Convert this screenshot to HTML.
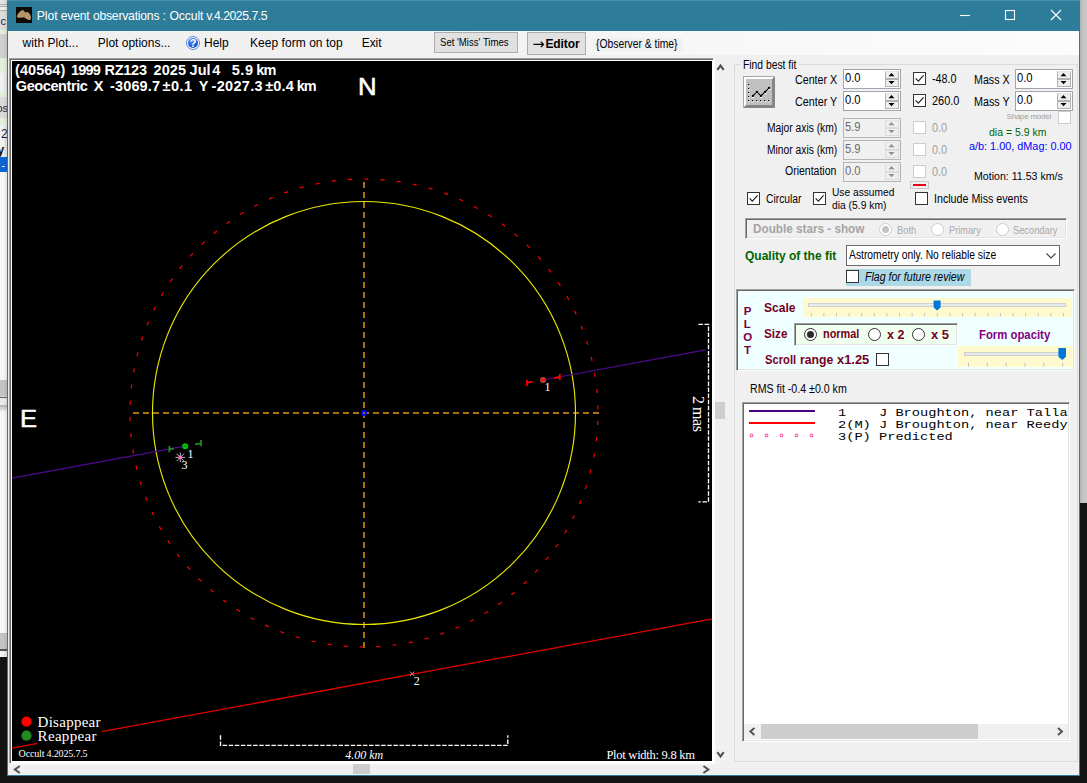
<!DOCTYPE html>
<html lang="en"><head><meta charset="utf-8"><title>Plot event observations : Occult v.4.2025.7.5</title>
<style>
html,body{margin:0;padding:0}
body{width:1087px;height:783px;overflow:hidden;position:relative;background:#131313;font-family:"Liberation Sans",Arial,sans-serif}
.a{position:absolute}
.t{position:absolute;white-space:pre;line-height:16px}
.btn{box-sizing:border-box;background:#e1e1e1;border:1px solid #adadad}
svg{display:block;overflow:visible}
</style></head><body>
<div class="a" id="left-strip" style="left:0;top:0;width:7px;height:657px;overflow:hidden;background:linear-gradient(90deg,#f3f3f3,#efefef 55%,#e3e1df)">
<div class="a" style="left:0;top:0px;width:7px;height:4px;background:#e2e2e2"></div>
<div class="a" style="left:0;top:4px;width:7px;height:1px;background:#adadad"></div>
<div class="a" style="left:0;top:5px;width:7px;height:1px;background:#e6e6e6"></div>
<div class="a" style="left:0;top:6px;width:7px;height:1px;background:#adadad"></div>
<div class="a" style="left:0;top:7px;width:7px;height:3px;background:#e6f3e2"></div>
<div class="a" style="left:0;top:10px;width:7px;height:1px;background:#b4b4b4"></div>
<div class="a" style="left:0;top:11px;width:7px;height:19px;background:#dcdcdc"></div>
<div class="a" style="left:0;top:30px;width:7px;height:4px;background:#e3efda"></div>
<div class="a" style="left:0;top:34px;width:7px;height:24px;background:#d0d0d0"></div>
<div class="a" style="left:0;top:58px;width:7px;height:15px;background:#e3efda"></div>
<div class="a" style="left:0;top:91px;width:7px;height:6px;background:#e3efda"></div>
<div class="a" style="left:0;top:97px;width:7px;height:21px;background:#dadada"></div>
<div class="a" style="left:0;top:118px;width:7px;height:7px;background:#e3efda"></div>
<div class="a" style="left:0;top:157px;width:7px;height:15px;background:#0a64d2"></div>
<div class="a" style="left:0;top:172px;width:7px;height:461px;background:#f6f6f6"></div>
<div class="a" style="left:0;top:380px;width:7px;height:16px;background:#c4c4c4"></div>
<div class="a" style="left:0;top:396px;width:7px;height:1px;background:#d8d8d8"></div>
<div class="a" style="left:0;top:397px;width:7px;height:1px;background:#5a6070"></div>
<div class="a" style="left:0;top:398px;width:7px;height:7px;background:#e9e9e9"></div>
<div class="a" style="left:0;top:405px;width:7px;height:2px;background:#b8b8b8"></div>
<div class="a" style="left:0;top:407px;width:7px;height:2px;background:#d0d0d0"></div>
<div class="a" style="left:0;top:409px;width:7px;height:2px;background:#e4e4e4"></div>
<div class="a" style="left:0;top:633px;width:7px;height:16px;background:#c3c3c3"></div>
<div class="a" style="left:0;top:649px;width:7px;height:2px;background:#4a5560"></div>
<span class="a" style="left:0.5px;top:14.5px;font:400 11px/12px &quot;Liberation Sans&quot;,Arial,sans-serif;color:#1a1a40;white-space:pre">c</span>
<span class="a" style="left:-3.5px;top:101.5px;font:400 11px/12px &quot;Liberation Sans&quot;,Arial,sans-serif;color:#1a1a40;white-space:pre">os</span>
<span class="a" style="left:1px;top:127.5px;font:400 12px/12px &quot;Liberation Sans&quot;,Arial,sans-serif;color:#1a1a40;white-space:pre">2</span>
<span class="a" style="left:-2.5px;top:143.5px;font:700 12px/12px &quot;Liberation Sans&quot;,Arial,sans-serif;color:#111;white-space:pre">y</span>
<span class="a" style="left:1.5px;top:158.5px;font:400 11px/12px &quot;Liberation Sans&quot;,Arial,sans-serif;color:#fff;white-space:pre">-</span>
<div class="a" style="left:0;top:0;width:7px;height:657px;background:linear-gradient(90deg,rgba(0,0,0,0) 45%,rgba(60,50,40,0.10))"></div>
</div>
<div class="a" id="right-shadow" style="left:1080px;top:0;width:7px;height:503px;background:linear-gradient(90deg,#b2b2b2,#c4c4c4 40%,#c9c9c9)"></div>
<div class="a" id="window" style="left:7px;top:0;width:1073px;height:776px;box-sizing:border-box;background:#F0F0F0;border:1px solid #2D7D9A;border-top:none"></div>
<div class="a" id="titlebar" style="left:7px;top:0;width:1073px;height:31px;background:#2D7D9A;border-top:1px solid #4a8fa8;box-sizing:border-box">
<svg class="a" style="left:9px;top:6px" width="16" height="16" viewBox="0 0 16 16"><rect width="16" height="16" fill="#0d0a06"/><path d="M0.9 9.4 C1.3 7.6 2.4 6.2 3.5 5.1 C4.6 4 5.6 3 6.6 2.9 C7.4 3 7.7 3.6 8.1 4.1 C8.6 4.8 8.9 5.4 9.4 5.6 C10.1 5.2 10.8 4.9 11.5 5.1 C12.6 5.5 13.4 6.5 14 7.5 C14.7 8.7 15.1 10 14.9 11.2 C14.7 12.4 14 13.1 13 13 C12.1 12.9 11.4 12.5 10.6 12.1 C9.8 11.6 9 10.7 8.1 10.4 C7.1 10.2 6.1 10.6 5.1 10.7 C4 10.8 3 10.9 2 10.6 C1.2 10.4 0.8 10 0.9 9.4 Z" fill="#b8966c"/><path d="M8.2 4.4 C7.6 6.4 8 8.6 9 10.6" stroke="#a08058" stroke-width="0.7" fill="none"/></svg>
<svg class="a" style="left:946px;top:-1px" width="120" height="31" viewBox="953 0 120 31" fill="none" stroke="#fff" stroke-width="1.1"><path d="M960 15.5H970"/><rect x="1005.5" y="10.5" width="9" height="9"/><path d="M1051 10L1061 20M1061 10L1051 20"/></svg>
</div>
<div class="a" id="menubar" style="left:8px;top:31px;width:1071px;height:24px;background:linear-gradient(90deg,#f0f0f0 0%,#f1f1f1 35%,#f8f8f8 70%,#fcfcfc 100%)">
<div class="a" id="helpicon" style="left:178px;top:5px;width:14px;height:14px"><div class="a" style="left:0;top:0;width:14px;height:14px;box-sizing:border-box;border-radius:50%;border:1px solid #5a82da;background:#fdfdff"></div><div class="a" style="left:2px;top:2px;width:10px;height:10px;border-radius:50%;background:radial-gradient(circle at 38% 30%,#5b93f0,#1f5bd8 55%,#0a36a8)"></div><span class="a" style="left:0;top:0;width:14px;height:14px;text-align:center;font:700 11px/14.6px &quot;Liberation Sans&quot;,Arial,sans-serif;color:#fff">?</span></div>
<div class="a btn" style="left:426px;top:1px;width:84px;height:21px"></div>
<div class="a btn" style="left:519px;top:1px;width:59px;height:23px"></div>
<div class="a" style="left:585px;top:7px;width:89px;height:13px;background:#f0f0f0"></div>
</div>
<div class="a" id="plot-panel" style="left:9px;top:58px;width:718px;height:717px">
<div class="a" id="picbox" style="left:0;top:0;width:706px;height:706px;box-sizing:border-box;background:#fff;border:1px solid;border-color:#a0a0a0 #fff #fff #a0a0a0;box-shadow:inset 1px 1px 0 #696969, inset -1px -1px 0 #fcfcfc"></div>
<div class="a" style="left:704px;top:0;width:2px;height:2px;background:#fbfbfb"></div>
<div class="a" id="vscroll" style="left:706px;top:3px;width:11px;height:703px;background:#f0f0f0">
<svg class="a" style="left:0;top:0" width="11" height="703" viewBox="715 61 11 703"><path d="M717.3 69.8L720.5 65.5L723.7 69.8" fill="none" stroke="#505050" stroke-width="2.1"/><rect x="715" y="402" width="10" height="17" fill="#cdcdcd"/><path d="M717.3 752.2L720.5 756.5L723.7 752.2" fill="none" stroke="#505050" stroke-width="2.1"/></svg>
</div>
<div class="a" id="hscroll" style="left:2px;top:706px;width:704px;height:11px;background:#f0f0f0">
<svg class="a" style="left:0;top:0" width="704" height="11" viewBox="11 764 704 11"><path d="M19.8 766L14.9 769.5L19.8 773" fill="none" stroke="#505050" stroke-width="2.1"/><rect x="353" y="764" width="17" height="10" fill="#cdcdcd"/><path d="M703.4 766L708.3 769.5L703.4 773" fill="none" stroke="#505050" stroke-width="2.1"/></svg>
</div>
</div>
<svg class="a" id="plot" style="left:12px;top:61px" width="700" height="700" viewBox="12 61 700 700">
<rect x="12" y="61" width="700" height="700" fill="#000"/>
<path d="M364 182V648" stroke="#aa7208" stroke-width="2" stroke-dasharray="6 4" fill="none"/>
<path d="M133 413H599" stroke="#aa7208" stroke-width="2" stroke-dasharray="6 4" fill="none"/>
<circle cx="364" cy="413" r="211.5" fill="none" stroke="#e8e800" stroke-width="1.15"/>
<circle cx="364" cy="413" r="234" fill="none" stroke="#f00" stroke-width="1.2" stroke-dasharray="4.084 12.252" stroke-dashoffset="-7.964"/>
<path d="M12 478.10L185 446.13M543 379.97L705.5 349.94M710.5 349.02L712 348.74" stroke="#4e0a90" stroke-width="1.2" fill="none"/>
<path d="M12 748.20L712 618.84" stroke="#e00000" stroke-width="1.3" fill="none"/>
<rect x="37" y="713" width="65" height="32" fill="#000"/>
<circle cx="364" cy="413" r="2.1" fill="none" stroke="#0000ff" stroke-width="1.9"/>
<g stroke="#ff0000" stroke-width="1.8" fill="none"><path d="M526.8 380V386M526.8 382.8L532.6 381.7"/><path d="M559.8 374V380M559.8 377L554 378.1"/></g>
<circle cx="543" cy="380" r="3" fill="#bc4434"/><path d="M540.6 380.4L545.4 379.6" stroke="#ff0000" stroke-width="1.3"/>
<g stroke="#228b22" stroke-width="1.8" fill="none"><path d="M169.4 446V452.2M169.4 449.3L173.8 448.5"/><path d="M201 440V446.2M201 443.3L195 444.4"/></g>
<circle cx="185.2" cy="446.2" r="3" fill="#00c800"/><path d="M183 446.6L187.4 445.9" stroke="#0a8a0a" stroke-width="1"/>
<g stroke="#c8c8c8" stroke-width="0.9"><path d="M180.3 452.6V462.2M175.5 457.4H185.1M176.6 453.7L184 461.1M184 453.7L176.6 461.1"/></g><circle cx="180.3" cy="457.4" r="2" fill="#ff69b4"/>
<path d="M410 671.6L414.4 676M414.4 671.6L410 676" stroke="#b4b4b4" stroke-width="0.9"/><circle cx="412.2" cy="673.8" r="0.9" fill="#ff6060"/>
<circle cx="26.5" cy="721.6" r="5.1" fill="#ff0000"/><circle cx="26.5" cy="735.7" r="5.1" fill="#228b22"/>
<g stroke="#fff" stroke-width="1.35" fill="none" stroke-dasharray="4.5 1.6"><path d="M698.4 324.4H708.5V501.8H698.4"/><path d="M220.5 735.3V745.4H507.8V735.3"/></g>
</svg>
<div class="a" id="groupbox" style="left:734px;top:64px;width:344px;height:698px;box-sizing:border-box;border:1px solid #dcdcdc"></div>
<div class="a" style="left:741px;top:60px;width:58px;height:10px;background:#F0F0F0"></div>
<div class="a" id="fitbtn" style="left:743px;top:76px;width:32px;height:32px"><svg class="a" style="left:0;top:0" width="32" height="32" viewBox="743 76 32 32"><rect x="743" y="76" width="32" height="32" fill="#868686"/><path d="M743 76H775L772 79H746V105L743 108Z" fill="#fff"/><path d="M743 76H775L774 77H744V107L743 108Z" fill="#a6a6a6"/><rect x="746" y="79" width="26" height="26" fill="#c0c0c0"/><rect x="748.2" y="84.9" width="1.6" height="1.3" fill="#fff"/><rect x="748" y="84" width="1.2" height="1.2" fill="#000"/><rect x="748.2" y="88.9" width="1.6" height="1.3" fill="#fff"/><rect x="748" y="88" width="1.2" height="1.2" fill="#000"/><rect x="748.2" y="92.9" width="1.6" height="1.3" fill="#fff"/><rect x="748" y="92" width="1.2" height="1.2" fill="#000"/><rect x="748.2" y="96.9" width="1.6" height="1.3" fill="#fff"/><rect x="748" y="96" width="1.2" height="1.2" fill="#000"/><rect x="748.2" y="100.9" width="1.6" height="1.3" fill="#fff"/><rect x="748" y="100" width="1.2" height="1.2" fill="#000"/><rect x="752.2" y="100.9" width="1.6" height="1.3" fill="#fff"/><rect x="752" y="100" width="1.2" height="1.2" fill="#000"/><rect x="756.2" y="100.9" width="1.6" height="1.3" fill="#fff"/><rect x="756" y="100" width="1.2" height="1.2" fill="#000"/><rect x="760.2" y="100.9" width="1.6" height="1.3" fill="#fff"/><rect x="760" y="100" width="1.2" height="1.2" fill="#000"/><rect x="764.2" y="100.9" width="1.6" height="1.3" fill="#fff"/><rect x="764" y="100" width="1.2" height="1.2" fill="#000"/><rect x="768.2" y="100.9" width="1.6" height="1.3" fill="#fff"/><rect x="768" y="100" width="1.2" height="1.2" fill="#000"/><rect x="752.1" y="96.3" width="2.2" height="1.8" fill="#fff"/><rect x="756.1" y="92.3" width="2.2" height="1.8" fill="#fff"/><rect x="760.2" y="96.3" width="2.2" height="1.8" fill="#fff"/><rect x="764.2" y="92.3" width="2.2" height="1.8" fill="#fff"/><rect x="768.3" y="88.3" width="2.2" height="1.8" fill="#fff"/><path d="M752.9 95.9L756.9 91.9L761 95.9L765 91.9L769.1 87.9" stroke="#000" stroke-width="1.1" fill="none"/><rect x="751.9" y="94.9" width="2" height="2" fill="#000"/><rect x="755.9" y="90.9" width="2" height="2" fill="#000"/><rect x="760.0" y="94.9" width="2" height="2" fill="#000"/><rect x="764.0" y="90.9" width="2" height="2" fill="#000"/><rect x="768.1" y="86.9" width="2" height="2" fill="#000"/></svg></div>
<div class="a nud" style="left:843px;top:69px;width:58px;height:20px;box-sizing:border-box;background:#fff;border:1px solid #a0a4ac"><div class="a" style="left:41px;top:1px;width:14px;height:16px;box-sizing:border-box;background:#eeeeee;border:1px solid #b2b2b2;border-top-color:#e6e6e6"></div><div class="a" style="left:41px;top:8px;width:14px;height:2px;background:#b2b2b2"></div><svg class="a" style="left:40px;top:1px" width="14" height="16" viewBox="0 0 14 16"><path d="M4.5 5.2L7.5 2L10.5 5.2ZM4.5 10L7.5 13.2L10.5 10Z" fill="#000"/></svg></div>
<div class="a nud" style="left:843px;top:91px;width:58px;height:20px;box-sizing:border-box;background:#fff;border:1px solid #a0a4ac"><div class="a" style="left:41px;top:1px;width:14px;height:16px;box-sizing:border-box;background:#eeeeee;border:1px solid #b2b2b2;border-top-color:#e6e6e6"></div><div class="a" style="left:41px;top:8px;width:14px;height:2px;background:#b2b2b2"></div><svg class="a" style="left:40px;top:1px" width="14" height="16" viewBox="0 0 14 16"><path d="M4.5 5.2L7.5 2L10.5 5.2ZM4.5 10L7.5 13.2L10.5 10Z" fill="#000"/></svg></div>
<div class="a chk" style="left:913px;top:72px;width:13px;height:13px;box-sizing:border-box;background:#fff;border:1px solid #333333"><svg class="a" style="left:0;top:0" width="11" height="11" viewBox="0 0 11 11"><path d="M1.6 5.4L4.3 8.2L9.6 2.4" fill="none" stroke="#222" stroke-width="1.2"/></svg></div>
<div class="a chk" style="left:913px;top:94px;width:13px;height:13px;box-sizing:border-box;background:#fff;border:1px solid #333333"><svg class="a" style="left:0;top:0" width="11" height="11" viewBox="0 0 11 11"><path d="M1.6 5.4L4.3 8.2L9.6 2.4" fill="none" stroke="#222" stroke-width="1.2"/></svg></div>
<div class="a nud" style="left:1015px;top:69px;width:58px;height:20px;box-sizing:border-box;background:#fff;border:1px solid #a0a4ac"><div class="a" style="left:41px;top:1px;width:14px;height:16px;box-sizing:border-box;background:#eeeeee;border:1px solid #b2b2b2;border-top-color:#e6e6e6"></div><div class="a" style="left:41px;top:8px;width:14px;height:2px;background:#b2b2b2"></div><svg class="a" style="left:40px;top:1px" width="14" height="16" viewBox="0 0 14 16"><path d="M4.5 5.2L7.5 2L10.5 5.2ZM4.5 10L7.5 13.2L10.5 10Z" fill="#000"/></svg></div>
<div class="a nud" style="left:1015px;top:91px;width:58px;height:20px;box-sizing:border-box;background:#fff;border:1px solid #a0a4ac"><div class="a" style="left:41px;top:1px;width:14px;height:16px;box-sizing:border-box;background:#eeeeee;border:1px solid #b2b2b2;border-top-color:#e6e6e6"></div><div class="a" style="left:41px;top:8px;width:14px;height:2px;background:#b2b2b2"></div><svg class="a" style="left:40px;top:1px" width="14" height="16" viewBox="0 0 14 16"><path d="M4.5 5.2L7.5 2L10.5 5.2ZM4.5 10L7.5 13.2L10.5 10Z" fill="#000"/></svg></div>
<div class="a chk" style="left:1058px;top:111px;width:13px;height:13px;box-sizing:border-box;background:#fff;border:1px solid #cccccc"></div>
<div class="a nud" style="left:843px;top:118px;width:58px;height:20px;box-sizing:border-box;background:#f0f0f0;border:1px solid #b4b4b8"><div class="a" style="left:41px;top:1px;width:14px;height:16px;box-sizing:border-box;background:#eeeeee;border:1px solid #dcdcdc;border-top-color:#e6e6e6"></div><div class="a" style="left:41px;top:8px;width:14px;height:2px;background:#dcdcdc"></div><svg class="a" style="left:40px;top:1px" width="14" height="16" viewBox="0 0 14 16"><path d="M4.5 5.2L7.5 2L10.5 5.2ZM4.5 10L7.5 13.2L10.5 10Z" fill="#909090"/></svg></div>
<div class="a nud" style="left:843px;top:140px;width:58px;height:20px;box-sizing:border-box;background:#f0f0f0;border:1px solid #b4b4b8"><div class="a" style="left:41px;top:1px;width:14px;height:16px;box-sizing:border-box;background:#eeeeee;border:1px solid #dcdcdc;border-top-color:#e6e6e6"></div><div class="a" style="left:41px;top:8px;width:14px;height:2px;background:#dcdcdc"></div><svg class="a" style="left:40px;top:1px" width="14" height="16" viewBox="0 0 14 16"><path d="M4.5 5.2L7.5 2L10.5 5.2ZM4.5 10L7.5 13.2L10.5 10Z" fill="#909090"/></svg></div>
<div class="a nud" style="left:843px;top:162px;width:58px;height:20px;box-sizing:border-box;background:#f0f0f0;border:1px solid #b4b4b8"><div class="a" style="left:41px;top:1px;width:14px;height:16px;box-sizing:border-box;background:#eeeeee;border:1px solid #dcdcdc;border-top-color:#e6e6e6"></div><div class="a" style="left:41px;top:8px;width:14px;height:2px;background:#dcdcdc"></div><svg class="a" style="left:40px;top:1px" width="14" height="16" viewBox="0 0 14 16"><path d="M4.5 5.2L7.5 2L10.5 5.2ZM4.5 10L7.5 13.2L10.5 10Z" fill="#909090"/></svg></div>
<div class="a chk" style="left:913px;top:121px;width:13px;height:13px;box-sizing:border-box;background:#fff;border:1px solid #cccccc"></div>
<div class="a chk" style="left:913px;top:143px;width:13px;height:13px;box-sizing:border-box;background:#fff;border:1px solid #cccccc"></div>
<div class="a chk" style="left:913px;top:165px;width:13px;height:13px;box-sizing:border-box;background:#fff;border:1px solid #cccccc"></div>
<div class="a" style="left:910px;top:181px;width:19px;height:8px;box-sizing:border-box;border:1px solid #c8c8c8"><div class="a" style="left:2px;top:2px;width:13px;height:2px;background:#f00018"></div></div>
<div class="a chk" style="left:747px;top:192px;width:13px;height:13px;box-sizing:border-box;background:#fff;border:1px solid #333333"><svg class="a" style="left:0;top:0" width="11" height="11" viewBox="0 0 11 11"><path d="M1.6 5.4L4.3 8.2L9.6 2.4" fill="none" stroke="#222" stroke-width="1.2"/></svg></div>
<div class="a chk" style="left:813px;top:192px;width:13px;height:13px;box-sizing:border-box;background:#fff;border:1px solid #333333"><svg class="a" style="left:0;top:0" width="11" height="11" viewBox="0 0 11 11"><path d="M1.6 5.4L4.3 8.2L9.6 2.4" fill="none" stroke="#222" stroke-width="1.2"/></svg></div>
<div class="a chk" style="left:915px;top:192px;width:13px;height:13px;box-sizing:border-box;background:#fff;border:1px solid #333333"></div>
<div class="a" id="dbl" style="left:745px;top:218px;width:322px;height:21px;box-sizing:border-box;border:1px solid;border-color:#a0a0a0 #fff #fff #a0a0a0;box-shadow:inset 1px 1px 0 #696969, inset -1px -1px 0 #e3e3e3"></div>
<div class="a radio" style="left:879.1px;top:223.0px;width:13px;height:13px;box-sizing:border-box;border-radius:50%;background:#fff;border:1px solid #cccccc"><div class="a" style="left:2px;top:2px;width:7px;height:7px;border-radius:50%;background:#c4c4c4"></div></div>
<div class="a radio" style="left:930.8px;top:223.0px;width:13px;height:13px;box-sizing:border-box;border-radius:50%;background:#fff;border:1px solid #cccccc"></div>
<div class="a radio" style="left:995.9px;top:223.0px;width:13px;height:13px;box-sizing:border-box;border-radius:50%;background:#fff;border:1px solid #cccccc"></div>
<div class="a" id="combo" style="left:846px;top:245px;width:214px;height:21px;box-sizing:border-box;background:#fff;border:1px solid #6a6a6a"><svg class="a" style="left:198px;top:6px" width="12" height="8" viewBox="0 0 12 8"><path d="M1.5 1.5L6 6L10.5 1.5" fill="none" stroke="#3a3a3a" stroke-width="1.1"/></svg></div>
<div class="a" style="left:846px;top:269px;width:125px;height:17px;background:#add8e6"></div>
<div class="a chk" style="left:846px;top:270px;width:13px;height:13px;box-sizing:border-box;background:#fff;border:1px solid #333333"></div>
<div class="a" id="plotctl" style="left:736px;top:289px;width:339px;height:82px;box-sizing:border-box;background:#f0ffff;border:1px solid;border-color:#a0a0a0 #fff #fff #a0a0a0;box-shadow:inset 1px 1px 0 #696969, inset -1px -1px 0 #e3e3e3"></div>
<div class="a chk" style="left:876px;top:353px;width:13px;height:13px;box-sizing:border-box;background:#fff;border:1px solid #333333"></div>
<svg class="a" id="scaleTrack" style="left:803px;top:298px" width="269" height="19" viewBox="803 298 269 19"><rect x="803" y="298" width="269" height="19" fill="#fffacd"/><rect x="808.5" y="303.5" width="257" height="3" fill="#e7eaea" stroke="#d0d0d0"/><path d="M811.3 313V316.5M823.9 313V316.5M836.5 313V316.5M849.1 313V316.5M861.7 313V316.5M874.3 313V316.5M886.9 313V316.5M899.5 313V316.5M912.1 313V316.5M924.7 313V316.5M937.3 313V316.5M950.0 313V316.5M962.6 313V316.5M975.2 313V316.5M987.8 313V316.5M1000.4 313V316.5M1013.0 313V316.5M1025.6 313V316.5M1038.2 313V316.5M1050.8 313V316.5M1063.4 313V316.5" stroke="#c4c4c4" stroke-width="1" fill="none"/><path d="M933.6 300.6H940.6V307.40000000000003L937.1 310.6L933.6 307.40000000000003Z" fill="#0078d7"/></svg>
<svg class="a" id="opacityTrack" style="left:958px;top:346px" width="115" height="21" viewBox="958 346 115 21"><rect x="958" y="346" width="115" height="21" fill="#fffacd"/><rect x="964.5" y="352.5" width="101" height="3" fill="#e7eaea" stroke="#d0d0d0"/><path d="M968.5 362.6V366.8M987.3 362.6V366.8M1006.1 362.6V366.8M1025.0 362.6V366.8M1043.8 362.6V366.8M1062.6 362.6V366.8" stroke="#c4c4c4" stroke-width="1" fill="none"/><path d="M1058.4 348H1066.0V356.8L1062.2 360L1058.4 356.8Z" fill="#0078d7"/></svg>
<div class="a" id="sizepanel" style="left:794px;top:323px;width:164px;height:23px;box-sizing:border-box;background:#f0fff0;border:1px solid;border-color:#a0a0a0 #fff #fff #a0a0a0;box-shadow:inset 1px 1px 0 #696969, inset -1px -1px 0 #e3e3e3"></div>
<div class="a radio" style="left:803.9px;top:328.0px;width:13px;height:13px;box-sizing:border-box;border-radius:50%;background:#fff;border:1px solid #333333"><div class="a" style="left:2px;top:2px;width:7px;height:7px;border-radius:50%;background:#2a2a2a"></div></div>
<div class="a radio" style="left:867.9px;top:328.0px;width:13px;height:13px;box-sizing:border-box;border-radius:50%;background:#fff;border:1px solid #333333"></div>
<div class="a radio" style="left:911.8px;top:328.0px;width:13px;height:13px;box-sizing:border-box;border-radius:50%;background:#fff;border:1px solid #333333"></div>
<div class="a" id="listbox" style="left:742px;top:402px;width:328px;height:340px;box-sizing:border-box;background:#fff;border:1px solid;border-color:#a0a0a0 #fff #fff #a0a0a0;box-shadow:inset 1px 1px 0 #696969, inset -1px -1px 0 #e3e3e3"><svg class="a" style="left:1px;top:1px" width="90" height="40" viewBox="744 404 90 40"><path d="M749 411H815" stroke="#4b0082" stroke-width="2"/><path d="M749 423H815" stroke="#ff0000" stroke-width="2"/><g fill="none" stroke="#ff5cae" stroke-width="1.1"><circle cx="751.5" cy="435.5" r="1.4"/><circle cx="766.5" cy="435.5" r="1.4"/><circle cx="781.5" cy="435.5" r="1.4"/><circle cx="796.5" cy="435.5" r="1.4"/><circle cx="811.5" cy="435.5" r="1.4"/></g></svg><div class="a" style="left:1px;top:321px;width:324px;height:15px;background:#f0f0f0"><svg class="a" style="left:0;top:0" width="324" height="15" viewBox="744 724 324 15"><path d="M754.4 728L750.4 731.5L754.4 735" fill="none" stroke="#505050" stroke-width="1.9"/><rect x="761" y="724" width="217" height="15" fill="#cdcdcd"/><path d="M1058 728L1062 731.5L1058 735" fill="none" stroke="#505050" stroke-width="1.9"/></svg></div></div>
<span class="t" id="t0" style='left:36.80px;top:8.00px;font:normal 400 12.2px/16px "Liberation Sans", Arial, sans-serif;color:#fff;letter-spacing:-0.079px;'>Plot</span>
<span class="t" id="t1" style='left:60.80px;top:8.00px;font:normal 400 12.2px/16px "Liberation Sans", Arial, sans-serif;color:#fff;letter-spacing:-0.226px;'>event</span>
<span class="t" id="t2" style='left:92.90px;top:8.00px;font:normal 400 12.2px/16px "Liberation Sans", Arial, sans-serif;color:#fff;letter-spacing:-0.226px;'>observations</span>
<span class="t" id="t3" style='left:162.40px;top:8.00px;font:normal 400 12.2px/16px "Liberation Sans", Arial, sans-serif;color:#fff;letter-spacing:-0.391px;'>:</span>
<span class="t" id="t4" style='left:169.50px;top:8.00px;font:normal 400 12.2px/16px "Liberation Sans", Arial, sans-serif;color:#fff;letter-spacing:-0.124px;'>Occult</span>
<span class="t" id="t5" style='left:206.20px;top:8.00px;font:normal 400 12.2px/16px "Liberation Sans", Arial, sans-serif;color:#fff;letter-spacing:-0.441px;'>v.4.2025.7.5</span>
<span class="t" id="t6" style='left:22.60px;top:35.00px;font:normal 400 12px/16px "Liberation Sans", Arial, sans-serif;color:#000008;letter-spacing:0.053px;'>with Plot...</span>
<span class="t" id="t7" style='left:97.80px;top:35.00px;font:normal 400 12px/16px "Liberation Sans", Arial, sans-serif;color:#000008;letter-spacing:-0.008px;'>Plot options...</span>
<span class="t" id="t8" style='left:204.00px;top:35.00px;font:normal 400 12px/16px "Liberation Sans", Arial, sans-serif;color:#000008;letter-spacing:-0.022px;'>Help</span>
<span class="t" id="t9" style='left:250.00px;top:35.00px;font:normal 400 12px/16px "Liberation Sans", Arial, sans-serif;color:#000008;letter-spacing:0.046px;'>Keep form on top</span>
<span class="t" id="t10" style='left:361.80px;top:35.00px;font:normal 400 12px/16px "Liberation Sans", Arial, sans-serif;color:#000008;letter-spacing:-0.104px;'>Exit</span>
<span class="t" id="t11" style='left:440.40px;top:34.00px;font:normal 400 10.6px/16px "Liberation Sans", Arial, sans-serif;color:#000008;transform-origin:0 50%;transform:scaleX(0.9043);'>Set 'Miss' Times</span>
<span class="t" id="t12" style='left:532.40px;top:36.00px;font:normal 400 14.5px/16px "DejaVu Sans", sans-serif;color:#000;letter-spacing:1.044px;'>→</span>
<span class="t" id="t13" style='left:545.40px;top:36.00px;font:normal 700 12px/16px "Liberation Sans", Arial, sans-serif;color:#000;letter-spacing:-0.079px;'>Editor</span>
<span class="t" id="t14" style='left:596.20px;top:36.00px;font:normal 400 12.5px/16px "Liberation Sans", Arial, sans-serif;color:#000010;transform-origin:0 50%;transform:scaleX(0.8261);'>{Observer &amp; time}</span>
<span class="t" id="t15" style='left:15.10px;top:62.00px;font:normal 700 14.5px/16px "Liberation Sans", Arial, sans-serif;color:#fff;letter-spacing:0.031px;'>(40564)</span>
<span class="t" id="t16" style='left:71.00px;top:62.00px;font:normal 700 14.5px/16px "Liberation Sans", Arial, sans-serif;color:#fff;letter-spacing:-0.841px;'>1999</span>
<span class="t" id="t17" style='left:104.40px;top:62.00px;font:normal 700 14.5px/16px "Liberation Sans", Arial, sans-serif;color:#fff;letter-spacing:-0.226px;'>RZ123</span>
<span class="t" id="t18" style='left:153.50px;top:62.00px;font:normal 700 14.5px/16px "Liberation Sans", Arial, sans-serif;color:#fff;letter-spacing:0.109px;'>2025</span>
<span class="t" id="t19" style='left:189.60px;top:62.00px;font:normal 700 14.5px/16px "Liberation Sans", Arial, sans-serif;color:#fff;letter-spacing:-0.018px;'>Jul</span>
<span class="t" id="t20" style='left:212.30px;top:62.00px;font:normal 700 14.5px/16px "Liberation Sans", Arial, sans-serif;color:#fff;letter-spacing:1.122px;'>4</span>
<span class="t" id="t21" style='left:231.70px;top:62.00px;font:normal 700 14.5px/16px "Liberation Sans", Arial, sans-serif;color:#fff;letter-spacing:0.576px;'>5.9</span>
<span class="t" id="t22" style='left:256.20px;top:62.00px;font:normal 700 14.5px/16px "Liberation Sans", Arial, sans-serif;color:#fff;letter-spacing:-0.784px;'>km</span>
<span class="t" id="t23" style='left:15.80px;top:78.00px;font:normal 700 14.5px/16px "Liberation Sans", Arial, sans-serif;color:#fff;letter-spacing:-0.415px;'>Geocentric</span>
<span class="t" id="t24" style='left:93.80px;top:78.00px;font:normal 700 14.5px/16px "Liberation Sans", Arial, sans-serif;color:#fff;letter-spacing:0.728px;'>X</span>
<span class="t" id="t25" style='left:110.00px;top:78.00px;font:normal 700 14.5px/16px "Liberation Sans", Arial, sans-serif;color:#fff;letter-spacing:0.145px;'>-3069.7</span>
<span class="t" id="t26" style='left:162.60px;top:78.00px;font:normal 700 14.5px/16px "Liberation Sans", Arial, sans-serif;color:#fff;letter-spacing:0.444px;'>±0.1</span>
<span class="t" id="t27" style='left:198.70px;top:78.00px;font:normal 700 14.5px/16px "Liberation Sans", Arial, sans-serif;color:#fff;letter-spacing:1.528px;'>Y</span>
<span class="t" id="t28" style='left:211.50px;top:78.00px;font:normal 700 14.5px/16px "Liberation Sans", Arial, sans-serif;color:#fff;letter-spacing:0.316px;'>-2027.3</span>
<span class="t" id="t29" style='left:265.30px;top:78.00px;font:normal 700 14.5px/16px "Liberation Sans", Arial, sans-serif;color:#fff;letter-spacing:0.094px;'>±0.4</span>
<span class="t" id="t30" style='left:296.80px;top:78.00px;font:normal 700 14.5px/16px "Liberation Sans", Arial, sans-serif;color:#fff;letter-spacing:-1.034px;'>km</span>
<span class="t" id="t31" style='left:357.90px;top:78.50px;font:normal 400 24px/16px "Liberation Sans", Arial, sans-serif;color:#fff;-webkit-text-stroke:0.55px #fff;transform-origin:0 50%;transform:scaleX(1.0724);'>N</span>
<span class="t" id="t32" style='left:20.10px;top:410.50px;font:normal 400 24px/16px "Liberation Sans", Arial, sans-serif;color:#fff;-webkit-text-stroke:0.55px #fff;transform-origin:0 50%;transform:scaleX(1.0615);'>E</span>
<span class="t" id="t33" style='left:544.40px;top:379.00px;font:normal 400 12px/16px "Liberation Serif", "Times New Roman", serif;color:#fff;'>1</span>
<span class="t" id="t34" style='left:187.40px;top:446.00px;font:normal 400 12px/16px "Liberation Serif", "Times New Roman", serif;color:#fff;'>1</span>
<span class="t" id="t35" style='left:181.60px;top:457.00px;font:normal 400 12px/16px "Liberation Serif", "Times New Roman", serif;color:#fff;'>3</span>
<span class="t" id="t36" style='left:413.80px;top:673.00px;font:normal 400 12px/16px "Liberation Serif", "Times New Roman", serif;color:#fff;'>2</span>
<span class="t" id="t37" style='left:37.60px;top:714.00px;font:normal 400 15px/16px "Liberation Serif", "Times New Roman", serif;color:#fff;letter-spacing:0.265px;'>Disappear</span>
<span class="t" id="t38" style='left:37.60px;top:728.00px;font:normal 400 15px/16px "Liberation Serif", "Times New Roman", serif;color:#fff;letter-spacing:0.320px;'>Reappear</span>
<span class="t" id="t39" style='left:18.60px;top:745.50px;font:normal 400 10px/16px "Liberation Serif", "Times New Roman", serif;color:#fff;letter-spacing:-0.168px;'>Occult 4.2025.7.5</span>
<span class="t" id="t40" style='left:345.20px;top:747.00px;font:italic 400 12px/16px "Liberation Serif", "Times New Roman", serif;color:#fff;'>4.00 km</span>
<span class="t" id="t41" style='left:606.40px;top:747.00px;font:normal 400 12.5px/16px "Liberation Serif", "Times New Roman", serif;color:#fff;letter-spacing:-0.260px;'>Plot width: 9.8 km</span>
<span class="t" id="t42" style='left:705.50px;top:396.20px;font:normal 400 16px/16px "Liberation Serif", "Times New Roman", serif;color:#fff;letter-spacing:-0.476px;transform-origin:0 0;transform:rotate(90deg);'>2 mas</span>
<span class="t" id="t43" style='left:742.60px;top:57.00px;font:normal 400 12.5px/16px "Liberation Sans", Arial, sans-serif;color:#000008;transform-origin:0 50%;transform:scaleX(0.8263);'>Find best fit</span>
<span class="t" id="t44" style='left:795.00px;top:72.00px;font:normal 400 12.5px/16px "Liberation Sans", Arial, sans-serif;color:#000008;transform-origin:0 50%;transform:scaleX(0.8552);'>Center X</span>
<span class="t" id="t45" style='left:795.00px;top:94.00px;font:normal 400 12.5px/16px "Liberation Sans", Arial, sans-serif;color:#000008;transform-origin:0 50%;transform:scaleX(0.8593);'>Center Y</span>
<span class="t" id="t46" style='left:844.60px;top:70.00px;font:normal 400 12.5px/16px "Liberation Sans", Arial, sans-serif;color:#000008;transform-origin:0 50%;transform:scaleX(0.8970);'>0.0</span>
<span class="t" id="t47" style='left:844.60px;top:92.00px;font:normal 400 12.5px/16px "Liberation Sans", Arial, sans-serif;color:#000008;transform-origin:0 50%;transform:scaleX(0.8970);'>0.0</span>
<span class="t" id="t48" style='left:931.60px;top:71.00px;font:normal 400 12.5px/16px "Liberation Sans", Arial, sans-serif;color:#000008;transform-origin:0 50%;transform:scaleX(0.8632);'>-48.0</span>
<span class="t" id="t49" style='left:931.80px;top:93.00px;font:normal 400 12.5px/16px "Liberation Sans", Arial, sans-serif;color:#000008;transform-origin:0 50%;transform:scaleX(0.8759);'>260.0</span>
<span class="t" id="t50" style='left:974.00px;top:72.00px;font:normal 400 12.5px/16px "Liberation Sans", Arial, sans-serif;color:#000008;transform-origin:0 50%;transform:scaleX(0.8540);'>Mass X</span>
<span class="t" id="t51" style='left:974.00px;top:94.00px;font:normal 400 12.5px/16px "Liberation Sans", Arial, sans-serif;color:#000008;transform-origin:0 50%;transform:scaleX(0.8588);'>Mass Y</span>
<span class="t" id="t52" style='left:1016.60px;top:70.00px;font:normal 400 12.5px/16px "Liberation Sans", Arial, sans-serif;color:#000008;transform-origin:0 50%;transform:scaleX(0.8970);'>0.0</span>
<span class="t" id="t53" style='left:1016.60px;top:92.00px;font:normal 400 12.5px/16px "Liberation Sans", Arial, sans-serif;color:#000008;transform-origin:0 50%;transform:scaleX(0.8970);'>0.0</span>
<span class="t" id="t54" style='left:1006.60px;top:108.50px;font:normal 400 8px/16px "Liberation Sans", Arial, sans-serif;color:#a0a0a0;letter-spacing:-0.251px;'>Shape model</span>
<span class="t" id="t55" style='left:767.00px;top:120.00px;font:normal 400 12.5px/16px "Liberation Sans", Arial, sans-serif;color:#000008;transform-origin:0 50%;transform:scaleX(0.8218);'>Major axis (km)</span>
<span class="t" id="t56" style='left:767.00px;top:142.00px;font:normal 400 12.5px/16px "Liberation Sans", Arial, sans-serif;color:#000008;transform-origin:0 50%;transform:scaleX(0.8218);'>Minor axis (km)</span>
<span class="t" id="t57" style='left:785.40px;top:163.00px;font:normal 400 12.5px/16px "Liberation Sans", Arial, sans-serif;color:#000008;transform-origin:0 50%;transform:scaleX(0.8405);'>Orientation</span>
<span class="t" id="t58" style='left:844.60px;top:119.00px;font:normal 400 12.5px/16px "Liberation Sans", Arial, sans-serif;color:#6d6d6d;transform-origin:0 50%;transform:scaleX(0.8970);'>5.9</span>
<span class="t" id="t59" style='left:844.60px;top:141.00px;font:normal 400 12.5px/16px "Liberation Sans", Arial, sans-serif;color:#6d6d6d;transform-origin:0 50%;transform:scaleX(0.8970);'>5.9</span>
<span class="t" id="t60" style='left:844.60px;top:163.00px;font:normal 400 12.5px/16px "Liberation Sans", Arial, sans-serif;color:#6d6d6d;transform-origin:0 50%;transform:scaleX(0.8970);'>0.0</span>
<span class="t" id="t61" style='left:932.00px;top:120.00px;font:normal 400 12.5px/16px "Liberation Sans", Arial, sans-serif;color:#a0a0a0;transform-origin:0 50%;transform:scaleX(0.8740);'>0.0</span>
<span class="t" id="t62" style='left:932.00px;top:142.00px;font:normal 400 12.5px/16px "Liberation Sans", Arial, sans-serif;color:#a0a0a0;transform-origin:0 50%;transform:scaleX(0.8740);'>0.0</span>
<span class="t" id="t63" style='left:932.00px;top:164.00px;font:normal 400 12.5px/16px "Liberation Sans", Arial, sans-serif;color:#a0a0a0;transform-origin:0 50%;transform:scaleX(0.8740);'>0.0</span>
<span class="t" id="t64" style='left:988.80px;top:124.00px;font:normal 400 10.5px/16px "Liberation Sans", Arial, sans-serif;color:#006400;transform-origin:0 50%;transform:scaleX(0.9983);'>dia = 5.9 km</span>
<span class="t" id="t65" style='left:969.40px;top:138.00px;font:normal 400 10.5px/16px "Liberation Sans", Arial, sans-serif;color:#0000ff;transform-origin:0 50%;transform:scaleX(1.0338);'>a/b: 1.00, dMag: 0.00</span>
<span class="t" id="t66" style='left:974.00px;top:168.00px;font:normal 400 10.5px/16px "Liberation Sans", Arial, sans-serif;color:#000008;transform-origin:0 50%;transform:scaleX(1.0098);'>Motion: 11.53 km/s</span>
<span class="t" id="t67" style='left:765.60px;top:191.00px;font:normal 400 12.5px/16px "Liberation Sans", Arial, sans-serif;color:#000008;transform-origin:0 50%;transform:scaleX(0.8221);'>Circular</span>
<span class="t" id="t68" style='left:831.80px;top:184.00px;font:normal 400 10.5px/16px "Liberation Sans", Arial, sans-serif;color:#000008;transform-origin:0 50%;transform:scaleX(0.9719);'>Use assumed</span>
<span class="t" id="t69" style='left:831.80px;top:197.00px;font:normal 400 10.5px/16px "Liberation Sans", Arial, sans-serif;color:#000008;transform-origin:0 50%;transform:scaleX(0.9813);'>dia (5.9 km)</span>
<span class="t" id="t70" style='left:933.80px;top:191.00px;font:normal 400 12.5px/16px "Liberation Sans", Arial, sans-serif;color:#000008;transform-origin:0 50%;transform:scaleX(0.8544);'>Include Miss events</span>
<span class="t" id="t71" style='left:753.20px;top:221.00px;font:normal 700 12.5px/16px "Liberation Sans", Arial, sans-serif;color:#a4a4a4;transform-origin:0 50%;transform:scaleX(0.9379);'>Double stars - show</span>
<span class="t" id="t72" style='left:896.80px;top:222.00px;font:normal 400 10.5px/16px "Liberation Sans", Arial, sans-serif;color:#a8a8a8;transform-origin:0 50%;transform:scaleX(0.8885);'>Both</span>
<span class="t" id="t73" style='left:948.80px;top:222.00px;font:normal 400 10.5px/16px "Liberation Sans", Arial, sans-serif;color:#a8a8a8;transform-origin:0 50%;transform:scaleX(0.8791);'>Primary</span>
<span class="t" id="t74" style='left:1013.20px;top:222.00px;font:normal 400 10.5px/16px "Liberation Sans", Arial, sans-serif;color:#a8a8a8;transform-origin:0 50%;transform:scaleX(0.8844);'>Secondary</span>
<span class="t" id="t75" style='left:745.40px;top:248.00px;font:normal 700 12.5px/16px "Liberation Sans", Arial, sans-serif;color:#006400;transform-origin:0 50%;transform:scaleX(0.9586);'>Quality of the fit</span>
<span class="t" id="t76" style='left:849.00px;top:247.00px;font:normal 400 12.5px/16px "Liberation Sans", Arial, sans-serif;color:#000008;transform-origin:0 50%;transform:scaleX(0.8255);'>Astrometry only. No reliable size</span>
<span class="t" id="t77" style='left:865.40px;top:269.00px;font:italic 400 12.5px/16px "Liberation Sans", Arial, sans-serif;color:#000008;transform-origin:0 50%;transform:scaleX(0.8465);'>Flag for future review</span>
<span class="t" id="t78" style='left:743.80px;top:303.00px;font:normal 700 11.5px/16px "Liberation Sans", Arial, sans-serif;color:#780040;'>P</span>
<span class="t" id="t79" style='left:743.80px;top:316.00px;font:normal 700 11.5px/16px "Liberation Sans", Arial, sans-serif;color:#780040;'>L</span>
<span class="t" id="t80" style='left:743.20px;top:329.00px;font:normal 700 11.5px/16px "Liberation Sans", Arial, sans-serif;color:#780040;'>O</span>
<span class="t" id="t81" style='left:744.00px;top:342.00px;font:normal 700 11.5px/16px "Liberation Sans", Arial, sans-serif;color:#780040;'>T</span>
<span class="t" id="t82" style='left:764.40px;top:300.00px;font:normal 700 12.5px/16px "Liberation Sans", Arial, sans-serif;color:#760022;transform-origin:0 50%;transform:scaleX(0.9672);'>Scale</span>
<span class="t" id="t83" style='left:764.40px;top:326.00px;font:normal 700 12.5px/16px "Liberation Sans", Arial, sans-serif;color:#760022;transform-origin:0 50%;transform:scaleX(0.9354);'>Size</span>
<span class="t" id="t84" style='left:765.30px;top:352.00px;font:normal 700 12.5px/16px "Liberation Sans", Arial, sans-serif;color:#760022;transform-origin:0 50%;transform:scaleX(0.8978);'>Scroll</span>
<span class="t" id="t85" style='left:800.10px;top:352.00px;font:normal 700 12.5px/16px "Liberation Sans", Arial, sans-serif;color:#760022;transform-origin:0 50%;transform:scaleX(0.9751);'>range</span>
<span class="t" id="t86" style='left:836.50px;top:352.00px;font:normal 700 12.5px/16px "Liberation Sans", Arial, sans-serif;color:#760022;transform-origin:0 50%;transform:scaleX(1.0326);'>x1.25</span>
<span class="t" id="t87" style='left:822.60px;top:326.00px;font:normal 700 12.5px/16px "Liberation Sans", Arial, sans-serif;color:#760022;transform-origin:0 50%;transform:scaleX(0.8732);'>normal</span>
<span class="t" id="t88" style='left:886.60px;top:327.00px;font:normal 700 12.5px/16px "Liberation Sans", Arial, sans-serif;color:#760022;transform-origin:0 50%;transform:scaleX(1.0005);'>x 2</span>
<span class="t" id="t89" style='left:930.80px;top:327.00px;font:normal 700 12.5px/16px "Liberation Sans", Arial, sans-serif;color:#760022;transform-origin:0 50%;transform:scaleX(1.0350);'>x 5</span>
<span class="t" id="t90" style='left:979.40px;top:327.00px;font:normal 700 12.5px/16px "Liberation Sans", Arial, sans-serif;color:#800080;transform-origin:0 50%;transform:scaleX(0.9070);'>Form opacity</span>
<span class="t" id="t91" style='left:749.60px;top:381.00px;font:normal 400 12.5px/16px "Liberation Sans", Arial, sans-serif;color:#000008;transform-origin:0 50%;transform:scaleX(0.8503);'>RMS fit -0.4 ±0.0 km</span>
<span class="t" id="t92" style='left:837.60px;top:404.50px;font:normal 400 11.5px/16px "Liberation Mono", "Courier New", monospace;color:#000;transform-origin:0 50%;transform:scaleX(1.1882);'>1    J Broughton, near Talla</span>
<span class="t" id="t93" style='left:837.60px;top:416.50px;font:normal 400 11.5px/16px "Liberation Mono", "Courier New", monospace;color:#000;transform-origin:0 50%;transform:scaleX(1.1882);'>2(M) J Broughton, near Reedy</span>
<span class="t" id="t94" style='left:837.60px;top:428.50px;font:normal 400 11.5px/16px "Liberation Mono", "Courier New", monospace;color:#000;transform-origin:0 50%;transform:scaleX(1.1881);'>3(P) Predicted</span>
</body></html>
